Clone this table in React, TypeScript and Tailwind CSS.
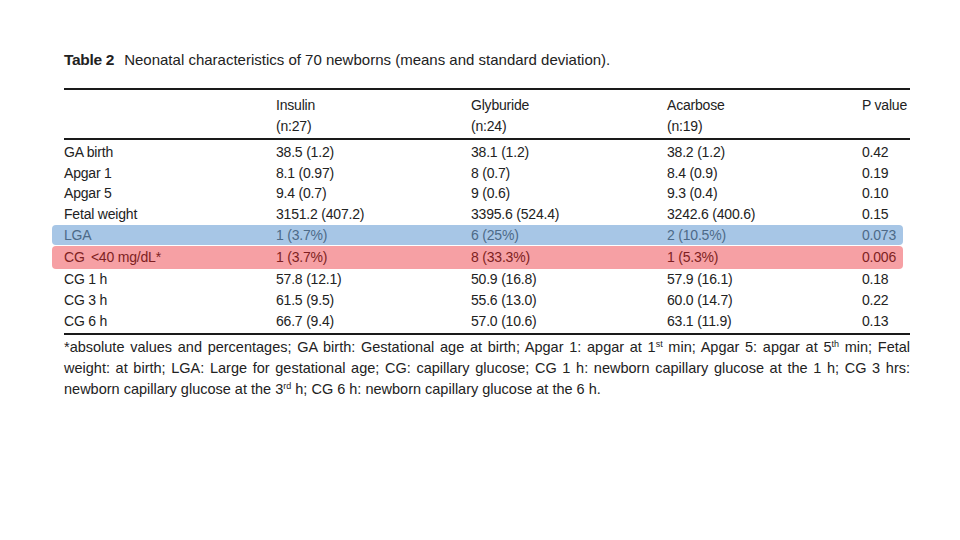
const rows: { label: string; ins: string; gly: string; aca: string; p: string; tone?: "blue" | "red" }[] = [
  { label: "GA birth", ins: "38.5 (1.2)", gly: "38.1 (1.2)", aca: "38.2 (1.2)", p: "0.42" },
  { label: "Apgar 1", ins: "8.1 (0.97)", gly: "8 (0.7)", aca: "8.4 (0.9)", p: "0.19" },
  { label: "Apgar 5", ins: "9.4 (0.7)", gly: "9 (0.6)", aca: "9.3 (0.4)", p: "0.10" },
  { label: "Fetal weight", ins: "3151.2 (407.2)", gly: "3395.6 (524.4)", aca: "3242.6 (400.6)", p: "0.15" },
  { label: "LGA", ins: "1 (3.7%)", gly: "6 (25%)", aca: "2 (10.5%)", p: "0.073", tone: "blue" },
  { label: "CG \u2009<40 mg/dL*", ins: "1 (3.7%)", gly: "8 (33.3%)", aca: "1 (5.3%)", p: "0.006", tone: "red" },
  { label: "CG 1 h", ins: "57.8 (12.1)", gly: "50.9 (16.8)", aca: "57.9 (16.1)", p: "0.18" },
  { label: "CG 3 h", ins: "61.5 (9.5)", gly: "55.6 (13.0)", aca: "60.0 (14.7)", p: "0.22" },
  { label: "CG 6 h", ins: "66.7 (9.4)", gly: "57.0 (10.6)", aca: "63.1 (11.9)", p: "0.13" },
];

function Sup({ children }: { children: string }) {
  return <span className="relative -top-[5px] text-[9px] leading-none">{children}</span>;
}

export default function App() {
  return (
    <div className="w-[960px] h-[540px] bg-white text-[#222] font-['Liberation_Sans',Arial,sans-serif] overflow-hidden">
      <div className="ml-[64px] pt-[50px] w-[846px]">
        {/* caption */}
        <div className="flex items-baseline text-[15px] leading-[20px] h-[38px]">
          <span className="font-bold text-[15.5px] tracking-[-0.3px]">Table 2</span>
          <span className="ml-[10px]">Neonatal characteristics of 70 newborns (means and standard deviation).</span>
        </div>

        <div className="h-[2px] bg-[#1a1a1a]" />

        {/* header */}
        <div className="grid grid-cols-[212px_195px_196px_195px_1fr] text-[14px] tracking-[-0.2px] leading-[21px] pt-[5px] pb-[1px]">
          <div />
          <div>Insulin<br />(n:27)</div>
          <div>Glyburide<br />(n:24)</div>
          <div>Acarbose<br />(n:19)</div>
          <div>P value</div>
        </div>
        <div className="h-[2px] bg-[#1a1a1a]" />

        {/* body */}
        <div className="pt-[2px] text-[14px] tracking-[-0.2px]">
          {rows.map((r) => (
            <div
              key={r.label}
              className={
                r.tone === "blue"
                  ? "grid grid-cols-[212px_195px_196px_195px_1fr] items-center h-[20px] -ml-[12px] pl-[12px] mr-[7px] rounded-[4px] bg-[#a7c6e6] text-[#4d6a88] mt-[1px]"
                  : r.tone === "red"
                  ? "grid grid-cols-[212px_195px_196px_195px_1fr] items-center h-[23px] -ml-[12px] pl-[12px] mr-[7px] rounded-[4px] bg-[#f6a0a4] text-[#7e1f22] mt-[1px]"
                  : "grid grid-cols-[212px_195px_196px_195px_1fr] items-center h-[20.6px]"
              }
            >
              <div>{r.label}</div>
              <div>{r.ins}</div>
              <div>{r.gly}</div>
              <div>{r.aca}</div>
              <div>{r.p}</div>
            </div>
          ))}
        </div>
        <div className="mt-[2px] h-[2px] bg-[#1a1a1a]" />

        {/* footnote */}
        <div className="mt-[2px] text-[14.5px] leading-[21px]">
          <p className="text-justify [text-align-last:justify]">
            *absolute values and percentages; GA birth: Gestational age at birth; Apgar 1: apgar at 1<Sup>st</Sup> min;
            Apgar 5: apgar at 5<Sup>th</Sup> min; Fetal
          </p>
          <p className="text-justify [text-align-last:justify]">
            weight: at birth; LGA: Large for gestational age; CG: capillary glucose; CG 1 h: newborn capillary glucose at
            the 1 h; CG 3 hrs:
          </p>
          <p>
            newborn capillary glucose at the 3<Sup>rd</Sup> h; CG 6 h: newborn capillary glucose at the 6 h.
          </p>
        </div>
      </div>
    </div>
  );
}
